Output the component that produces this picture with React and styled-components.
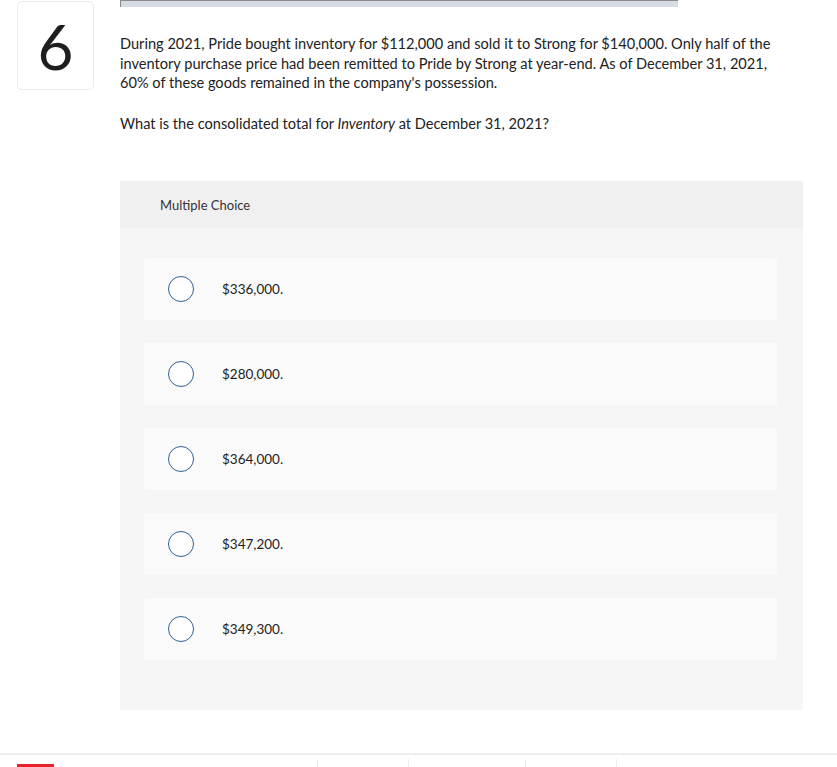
import React from "react";
import styled, { createGlobalStyle } from "styled-components";

const GlobalStyle = createGlobalStyle`
  html, body {
    margin: 0;
    padding: 0;
    background: #ffffff;
    font-family: Lato, "Open Sans", sans-serif;
    color: #1f1f1f;
  }
`;

const choices = ["$336,000.", "$280,000.", "$364,000.", "$347,200.", "$349,300."];

export default function App() {
  return (
    <>
      <GlobalStyle />
      <Page>
        <QuestionRow>
          <NumberBox>6</NumberBox>
          <Content>
            <ProgressBar />
            <Prompt>
              During 2021, Pride bought inventory for $112,000 and sold it to Strong for $140,000. Only half of the
              <br />
              inventory purchase price had been remitted to Pride by Strong at year-end. As of December 31, 2021,
              <br />
              60% of these goods remained in the company's possession.
            </Prompt>
            <Prompt>
              What is the consolidated total for <em>Inventory</em> at December 31, 2021?
            </Prompt>
            <ChoicePanel>
              <PanelHeader>Multiple Choice</PanelHeader>
              <ChoiceList>
                {choices.map((c) => (
                  <Choice key={c}>
                    <Radio />
                    <ChoiceText>{c}</ChoiceText>
                  </Choice>
                ))}
              </ChoiceList>
            </ChoicePanel>
          </Content>
        </QuestionRow>
        <Footer>
          <Logo />
          <FooterLinks>
            <FooterLink $w={90} />
            <FooterLink $w={116} />
            <FooterLink $w={90} />
            <FooterLink $w={60} />
          </FooterLinks>
        </Footer>
      </Page>
    </>
  );
}

const Page = styled.div`
  width: 837px;
  overflow: hidden;
`;

const QuestionRow = styled.div`
  display: flex;
  align-items: flex-start;
`;

const NumberBox = styled.div`
  box-sizing: border-box;
  width: 77px;
  height: 89px;
  margin: 1px 0 0 17px;
  border: 1px solid #ebebeb;
  border-radius: 5px;
  display: flex;
  align-items: center;
  justify-content: center;
  font-size: 62px;
  font-weight: 400;
  color: #1e1e1e;
  line-height: 1;
`;

const Content = styled.div`
  margin-left: 26px;
  width: 683px;
`;

const ProgressBar = styled.div`
  box-sizing: border-box;
  width: 558px;
  height: 7px;
  background: #d7dbe5;
  border-top: 1px solid #8a8a8f;
  border-left: 1px solid #8a8a8f;
`;

const Prompt = styled.p`
  margin: 27px 0 0;
  font-size: 14.6px;
  line-height: 19.5px;
  color: #222;
  white-space: nowrap;

  & + & {
    margin-top: 21px;
  }

  em {
    font-style: italic;
  }
`;

const ChoicePanel = styled.div`
  margin-top: 48px;
  background: #f5f5f5;
  border-radius: 2px;
  padding-bottom: 50px;
`;

const PanelHeader = styled.div`
  height: 47px;
  background: #f0f0f0;
  padding-left: 40px;
  display: flex;
  align-items: center;
  font-size: 13px;
  color: #333;
`;

const ChoiceList = styled.div`
  display: flex;
  flex-direction: column;
  gap: 23px;
  padding: 30px 26px 0 24px;
`;

const Choice = styled.div`
  height: 62px;
  background: #fafafa;
  border-radius: 2px;
  display: flex;
  align-items: center;
  padding-left: 24px;
`;

const Radio = styled.span`
  box-sizing: border-box;
  width: 26px;
  height: 26px;
  border-radius: 50%;
  border: 1.5px solid #2f6193;
  background: #fff;
  flex-shrink: 0;
`;

const ChoiceText = styled.span`
  margin-left: 28px;
  font-size: 13.5px;
  color: #222;
`;

const Footer = styled.div`
  margin-top: 43px;
  border-top: 2px solid #eeeeee;
  height: 40px;
  display: flex;
  align-items: flex-start;
  padding-top: 4px;
`;

const Logo = styled.div`
  width: 37px;
  height: 24px;
  margin: 5px 0 0 17px;
  background: #e4232b;
`;

const FooterLinks = styled.div`
  display: flex;
  margin-left: 263px;
`;

const FooterLink = styled.div`
  width: ${(p) => p.$w}px;
  height: 24px;
  border-left: 1px solid #ececec;
`;
